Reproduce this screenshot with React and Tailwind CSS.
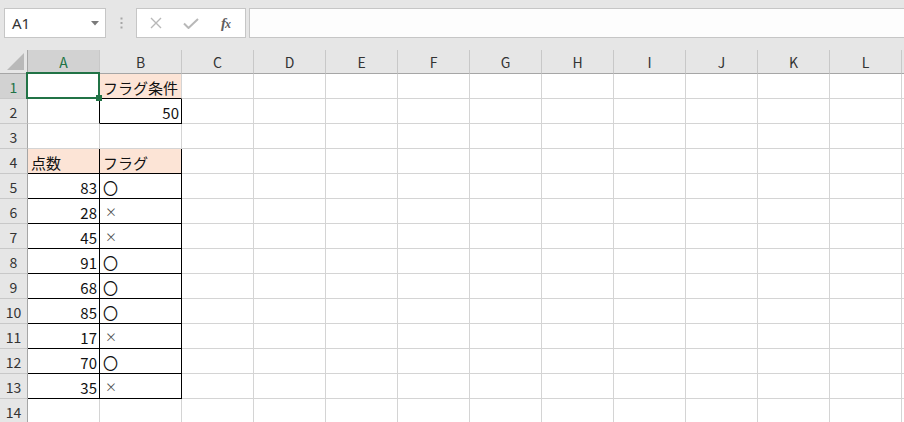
import React from 'react';

const COLS = ['A', 'B', 'C', 'D', 'E', 'F', 'G', 'H', 'I', 'J', 'K', 'L', 'M'];
const ROWS = [1, 2, 3, 4, 5, 6, 7, 8, 9, 10, 11, 12, 13, 14, 15];

const scores = [
  [83, '〇'],
  [28, '×'],
  [45, '×'],
  [91, '〇'],
  [68, '〇'],
  [85, '〇'],
  [17, '×'],
  [70, '〇'],
  [35, '×'],
];

// cell contents + which edges carry a black border
function cellInfo(col, row) {
  const info = { text: '', align: 'left', fill: false, right: false, bottom: false, mark: false };
  if (col === 'B' && row === 1) return { ...info, text: 'フラグ条件', fill: true, bottom: true };
  if (col === 'A' && row === 2) return { ...info, right: true };
  if (col === 'B' && row === 2) return { ...info, text: '50', align: 'right', right: true, bottom: true };
  if (row === 4 && col === 'A') return { ...info, text: '点数', fill: true, right: true, bottom: true };
  if (row === 4 && col === 'B') return { ...info, text: 'フラグ', fill: true, right: true, bottom: true };
  if (row >= 5 && row <= 13 && (col === 'A' || col === 'B')) {
    const [score, flag] = scores[row - 5];
    if (col === 'A') return { ...info, text: String(score), align: 'right', right: true, bottom: true };
    return { ...info, text: flag, mark: flag === '×', right: true, bottom: true };
  }
  return info;
}

const Cell = ({ col, row }) => {
  const c = cellInfo(col, row);
  return (
    <div
      className={
        'flex items-center border-r border-b overflow-hidden whitespace-nowrap pt-[2px] ' +
        (c.right ? 'border-r-black ' : 'border-r-[#d4d4d4] ') +
        (c.bottom ? 'border-b-black ' : 'border-b-[#d4d4d4] ') +
        (c.fill ? 'bg-[#fce4d6] ' : 'bg-white ') +
        (c.align === 'right' ? 'justify-end pr-[2px] ' : 'justify-start pl-[3px] ') +
        (c.mark ? 'text-[#505050] text-[12px] pl-[5px]' : 'text-[#111]')
      }
    >
      {c.text}
    </div>
  );
};

const Toolbar = () => (
  <div className="h-[50px] bg-[#e6e6e6] flex items-start pt-[8px]">
    {/* name box */}
    <div className="shrink-0 ml-[4px] w-[102px] h-[30px] bg-white border border-[#c6c6c6] flex items-center justify-between pl-[7px] pr-[6px]">
      <span className="text-[15px] text-[#333]" style={{ fontFamily: '"Noto Sans", "Open Sans", sans-serif' }}>A1</span>
      <svg width="8" height="5" viewBox="0 0 8 5">
        <path d="M0 0 L8 0 L4 4.5 Z" fill="#7a7a7a" />
      </svg>
    </div>
    <div className="shrink-0 w-[30px] h-[30px] flex items-center justify-center">
      <svg width="3" height="12" viewBox="0 0 3 12">
        <rect x="0.5" y="0.5" width="2" height="2" fill="#a6a6a6" />
        <rect x="0.5" y="5" width="2" height="2" fill="#a6a6a6" />
        <rect x="0.5" y="9.5" width="2" height="2" fill="#a6a6a6" />
      </svg>
    </div>
    {/* cancel / enter / function */}
    <div className="shrink-0 w-[110px] h-[30px] bg-white border border-[#c6c6c6] flex items-center">
      <svg className="ml-[13px]" width="12" height="12" viewBox="0 0 12 12">
        <path d="M1 1 L11 11 M11 1 L1 11" stroke="#b8b8b8" strokeWidth="1.4" />
      </svg>
      <svg className="ml-[21px]" width="16" height="11" viewBox="0 0 16 11">
        <path d="M1 5.5 L5.5 10 L15 1" stroke="#b8b8b8" strokeWidth="2" fill="none" />
      </svg>
      <span
        className="ml-[22px] text-[15px] italic font-bold text-[#5f5f5f] leading-none tracking-[-1px]"
        style={{ fontFamily: '"Liberation Serif", "DejaVu Serif", serif' }}
      >
        f<span className="text-[12px]">x</span>
      </span>
    </div>
    <div className="shrink-0 ml-[3px] w-[700px] h-[30px] bg-[#fdfdfd] border border-[#c6c6c6]" />
  </div>
);

export default function App() {
  return (
    <div
      className="relative w-[904px] h-[422px] overflow-hidden bg-white"
      style={{ fontFamily: '"Noto Sans CJK JP", "Noto Sans", sans-serif' }}
    >
      <Toolbar />
      <div className="grid grid-cols-[28px_72px_82px_repeat(11,72px)] grid-rows-[24px_repeat(15,25px)] text-[15px] leading-none">
        {/* corner */}
        <div className="relative bg-[#e6e6e6] border-r border-b border-[#a6a6a6]">
          <svg className="absolute left-[7px] top-[3px]" width="17" height="17" viewBox="0 0 17 17">
            <path d="M17 0 L17 17 L0 17 Z" fill="#b9b9b9" />
          </svg>
        </div>
        {COLS.map((col) => (
          <div
            key={col}
            className={
              'flex items-center justify-center border-r border-b border-r-[#c8c8c8] border-b-[#a6a6a6] text-[14px] pt-[1px] ' +
              (col === 'A' ? 'bg-[#d2d2d2] text-[#217346]' : 'bg-[#e6e6e6] text-[#333]')
            }
          >
            {col === 'M' ? '' : col}
          </div>
        ))}
        {ROWS.map((row) => (
          <React.Fragment key={row}>
            <div
              className={
                'flex items-center justify-center border-r border-b border-r-[#a6a6a6] border-b-[#c8c8c8] text-[14px] pt-[2px] ' +
                (row === 1 ? 'bg-[#d2d2d2] text-[#217346]' : 'bg-[#e6e6e6] text-[#333]')
              }
            >
              {row <= 14 ? row : ''}
            </div>
            {COLS.map((col) => (
              <Cell key={col + row} col={col} row={row} />
            ))}
          </React.Fragment>
        ))}
      </div>
      {/* active cell A1 selection */}
      <div className="absolute left-[26px] top-[72px] w-[74px] h-[27px] border-2 border-[#217346] pointer-events-none" />
      <div className="absolute left-[96px] top-[95px] w-[6px] h-[6px] bg-[#217346] pointer-events-none" />
    </div>
  );
}
